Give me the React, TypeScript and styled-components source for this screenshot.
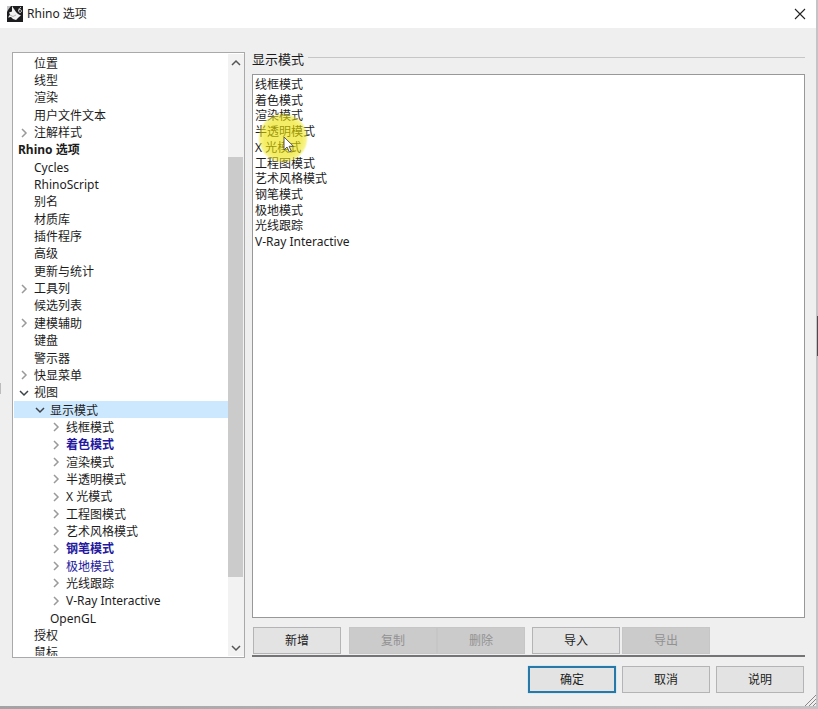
import React from "react";
import styled, { createGlobalStyle, css } from "styled-components";

const GlobalStyle = createGlobalStyle`
  * { box-sizing: border-box; }
  body {
    margin: 0;
    background: #a3a3a5;
    color: #1c1c1c;
    font-family: "Noto Sans", "Noto Sans CJK SC", sans-serif;
    font-size: 12px;
  }
  button { font: inherit; color: inherit; }
  ul { list-style: none; margin: 0; padding: 0; }
`;

const Desktop = styled.div`
  height: 100vh;
  min-height: 400px;
  display: flex;
  flex-direction: column;
  padding: 0 2px 3px 0;
  background: linear-gradient(#4c4c4e, #4c4c4e) right 316px / 1px 40px no-repeat,
    linear-gradient(90deg, #a3a3a5, #c4c4c6);
  background-size: 1px 40px, 100% 100%;
`;

const Dialog = styled.main`
  position: relative;
  flex: 1;
  min-height: 0;
  display: flex;
  flex-direction: column;
  background: #efeff0;
`;

const TitleBar = styled.header`
  height: 28px;
  flex: none;
  display: flex;
  align-items: center;
  gap: 4px;
  padding: 0 9px 1px 7px;
  background: #fff;
`;

const Title = styled.h1`
  flex: 1;
  margin: 0;
  font-size: 12px;
  font-weight: 400;
  line-height: 26px;
`;

const IconButton = styled.button`
  display: flex;
  align-items: center;
  justify-content: center;
  flex: none;
  padding: 0;
  border: 0;
  background: transparent;
`;

const Body = styled.div`
  flex: 1;
  min-height: 0;
  display: grid;
  grid-template-columns: 233px minmax(0, 1fr);
  gap: 7px;
  padding: 24px 11px 0 12px;
`;

const TreeFrame = styled.nav`
  display: flex;
  min-height: 0;
  border: 1px solid #a9a9ab;
  padding: 1px 0 1px 1px;
  background: #fff;
  overflow: hidden;
`;

const TreeView = styled.div`
  flex: 1;
  min-width: 0;
  overflow: hidden;
`;

const Tree = styled.ul`
  height: calc(100% + 5px);
  display: flex;
  flex-direction: column;
`;

const TreeRow = styled.li<{ $level: number; $selected?: boolean; $tone?: Tone }>`
  flex: 1 1 0;
  min-height: 0;
  display: flex;
  align-items: center;
  padding-top: 1px;
  padding-left: ${(p) => p.$level * 16 - 14}px;
  white-space: nowrap;
  line-height: 17px;
  ${(p) => p.$selected && css`background: #cce8ff;`}
  ${(p) => (p.$tone === "bold" || p.$tone === "boldBlue") && css`font-weight: 700;`}
  ${(p) => (p.$tone === "blue" || p.$tone === "boldBlue") && css`color: #2417a0;`}
`;

const Twisty = styled(IconButton)`
  width: 16px;
  height: 16px;
  margin-right: 2px;
`;

const TwistySpace = styled.span`
  width: 18px;
  flex: none;
`;

const ScrollBar = styled.div`
  width: 16px;
  flex: none;
  display: flex;
  flex-direction: column;
  padding-right: 1px;
  background: #f2f2f2;
`;

const ScrollArrow = styled(IconButton)`
  height: 17px;
`;

const ScrollGap = styled.div<{ $share: number }>`
  flex: ${(p) => p.$share} 1 0;
`;

const ScrollThumb = styled.div<{ $share: number }>`
  flex: ${(p) => p.$share} 1 0;
  background: #cbcbcb;
`;

const Panel = styled.section`
  display: flex;
  flex-direction: column;
  min-height: 0;
  margin-bottom: 1px;
  border-bottom: 2px solid #747476;
`;

const PanelHeading = styled.div`
  display: flex;
  gap: 4px;
  height: 22px;
  flex: none;
  &::after {
    content: "";
    flex: 1;
    height: 1px;
    margin-top: 5px;
    background: #c6c6c8;
  }
`;

const PanelTitle = styled.h2`
  margin: 0;
  font-size: 13px;
  font-weight: 400;
  line-height: 14px;
`;

const ListBox = styled.div`
  position: relative;
  flex: 1;
  min-height: 0;
  padding: 2px;
  border: 1px solid #98989a;
  background: #fff;
  overflow: hidden;
`;

const ModeList = styled.ul`
  height: 173px;
  display: grid;
  grid-template-rows: repeat(11, 1fr);
`;

const ModeItem = styled.li`
  display: flex;
  align-items: center;
  min-height: 0;
  line-height: 16px;
`;

const ClickHalo = styled.div`
  position: absolute;
  left: 5px;
  top: 38px;
  width: 50px;
  height: 50px;
  border-radius: 50%;
  background: radial-gradient(closest-side, rgba(236, 226, 0, 0.6) 75%, rgba(240, 232, 30, 0.5) 92%, rgba(250, 245, 120, 0.1));
  pointer-events: none;
`;

const Pointer = styled.svg`
  position: absolute;
  left: 30px;
  top: 61px;
  pointer-events: none;
`;

const Actions = styled.div`
  display: flex;
  padding: 9px 0 1px 1px;
  flex: none;
`;

const Button = styled.button<{ $primary?: boolean; $after?: number }>`
  width: 88px;
  height: 27px;
  flex: none;
  padding: 0;
  margin-right: ${(p) => p.$after ?? 0}px;
  border: ${(p) => (p.$primary ? "2px solid #2879a8" : "1px solid #b4b4b6")};
  background: #e3e3e3;
  line-height: 18px;
  ${(p) => p.$primary && css`box-shadow: 0 0 1px #68cdf0;`}
  &:disabled {
    border-color: #c6c6c6;
    background: #cbcbcb;
    color: #929292;
  }
  &:disabled + &:disabled {
    border-left-color: #e8e8e8;
  }
`;

const Footer = styled.footer`
  display: flex;
  justify-content: flex-end;
  gap: 6px;
  flex: none;
  padding: 8px 12px 13px;
`;

const ResizeGrip = styled.svg`
  position: absolute;
  right: 0;
  bottom: 0;
`;

const EdgeMark = styled.span`
  position: absolute;
  left: 0;
  top: 383px;
  width: 1px;
  height: 11px;
  background: #bcbcbe;
`;

type Tone = "bold" | "blue" | "boldBlue";
type Node = { label: string; level: number; state?: "open" | "closed"; tone?: Tone; selected?: boolean };

const nodes: Node[] = [
  { label: "位置", level: 1 },
  { label: "线型", level: 1 },
  { label: "渲染", level: 1 },
  { label: "用户文件文本", level: 1 },
  { label: "注解样式", level: 1, state: "closed" },
  { label: "Rhino 选项", level: 0, tone: "bold" },
  { label: "Cycles", level: 1 },
  { label: "RhinoScript", level: 1 },
  { label: "别名", level: 1 },
  { label: "材质库", level: 1 },
  { label: "插件程序", level: 1 },
  { label: "高级", level: 1 },
  { label: "更新与统计", level: 1 },
  { label: "工具列", level: 1, state: "closed" },
  { label: "候选列表", level: 1 },
  { label: "建模辅助", level: 1, state: "closed" },
  { label: "键盘", level: 1 },
  { label: "警示器", level: 1 },
  { label: "快显菜单", level: 1, state: "closed" },
  { label: "视图", level: 1, state: "open" },
  { label: "显示模式", level: 2, state: "open", selected: true },
  { label: "线框模式", level: 3, state: "closed" },
  { label: "着色模式", level: 3, state: "closed", tone: "boldBlue" },
  { label: "渲染模式", level: 3, state: "closed" },
  { label: "半透明模式", level: 3, state: "closed" },
  { label: "X 光模式", level: 3, state: "closed" },
  { label: "工程图模式", level: 3, state: "closed" },
  { label: "艺术风格模式", level: 3, state: "closed" },
  { label: "钢笔模式", level: 3, state: "closed", tone: "boldBlue" },
  { label: "极地模式", level: 3, state: "closed", tone: "blue" },
  { label: "光线跟踪", level: 3, state: "closed" },
  { label: "V-Ray Interactive", level: 3, state: "closed" },
  { label: "OpenGL", level: 2 },
  { label: "授权", level: 1 },
  { label: "鼠标", level: 1 },
];

const modes = nodes.filter((n) => n.level === 3).map((n) => n.label);

const RootRow = styled(TreeRow)`
  padding-left: 4px;
`;

const paths = {
  right: "M3 1l4 4-4 4",
  down: "M1 3l4 4 4-4",
  up: "M1 7l4-4 4 4",
};

function Chevron({ dir, color }: { dir: keyof typeof paths; color: string }) {
  return (
    <svg width="10" height="10" viewBox="0 0 10 10" fill="none" stroke={color} strokeWidth="1.5" aria-hidden="true">
      <path d={paths[dir]} />
    </svg>
  );
}

function RhinoIcon() {
  return (
    <svg width="16" height="16" viewBox="0 0 16 16" aria-hidden="true">
      <rect width="16" height="16" fill="#1d1d1f" />
      <path d="M5 0l2 3 2 3 2 2 3 1.500-2 1.500-3 3-3-1-2-2-3 .5 2-3-1-2 3-1z" fill="#f2f2f3" />
      <path d="M0 0h4L1 4 0 6z" fill="#c4c4c7" />
      <path d="M3 9l3 1.500L9 9" fill="none" stroke="#b4b4b8" />
      <path d="M14 1.500c-2.600 0-3 5-1 5s1.800-3 0-3-1.500 1.200-1.500 1.200" fill="none" stroke="#dcdcdc" />
    </svg>
  );
}

function TreeItem({ node }: { node: Node }) {
  const Row = node.level === 0 ? RootRow : TreeRow;
  return (
    <Row
      role="treeitem"
      aria-level={node.level + 1}
      aria-selected={!!node.selected}
      aria-expanded={node.state ? node.state === "open" : undefined}
      $level={node.level}
      $selected={node.selected}
      $tone={node.tone}
    >
      {node.state && (
        <Twisty aria-label={node.label}>
          <Chevron dir={node.state === "open" ? "down" : "right"} color={node.state === "open" ? "#3c4248" : "#9a9a9a"} />
        </Twisty>
      )}
      {!node.state && node.level > 0 && <TwistySpace />}
      {node.label}
    </Row>
  );
}

export default function App() {
  return (
    <>
      <GlobalStyle />
      <Desktop>
        <Dialog>
          <TitleBar>
            <RhinoIcon />
            <Title>Rhino 选项</Title>
            <IconButton aria-label="关闭">
              <svg width="14" height="14" viewBox="0 0 14 14" stroke="#222" strokeWidth="1.1" aria-hidden="true">
                <path d="M2 2l10 10M12 2L2 12" />
              </svg>
            </IconButton>
          </TitleBar>
          <Body>
            <TreeFrame aria-label="选项">
              <TreeView>
                <Tree role="tree">
                  {nodes.map((node, i) => (
                    <TreeItem key={i} node={node} />
                  ))}
                </Tree>
              </TreeView>
              <ScrollBar>
                <ScrollArrow aria-label="向上">
                  <Chevron dir="up" color="#555" />
                </ScrollArrow>
                <ScrollGap $share={86} />
                <ScrollThumb $share={420} />
                <ScrollGap $share={62} />
                <ScrollArrow aria-label="向下">
                  <Chevron dir="down" color="#555" />
                </ScrollArrow>
              </ScrollBar>
            </TreeFrame>
            <Panel>
              <PanelHeading>
                <PanelTitle>显示模式</PanelTitle>
              </PanelHeading>
              <ListBox>
                <ModeList role="listbox" aria-label="显示模式">
                  {modes.map((mode) => (
                    <ModeItem key={mode} role="option" aria-selected={false}>
                      {mode}
                    </ModeItem>
                  ))}
                </ModeList>
                <ClickHalo />
                <Pointer width="12" height="18" viewBox="0 0 12 18" aria-hidden="true">
                  <path d="M1 1v13l3-3 2.300 5 2-1-2.200-4.700H10.500z" fill="#fff" stroke="#555" />
                </Pointer>
              </ListBox>
              <Actions>
                <Button $after={8}>新增</Button>
                <Button disabled>复制</Button>
                <Button disabled $after={7}>删除</Button>
                <Button $after={2}>导入</Button>
                <Button disabled>导出</Button>
              </Actions>
            </Panel>
          </Body>
          <Footer>
            <Button $primary>确定</Button>
            <Button>取消</Button>
            <Button>说明</Button>
          </Footer>
          <EdgeMark />
          <ResizeGrip width="12" height="12" viewBox="0 0 12 12" stroke="#8c8486" aria-hidden="true">
            <path d="M1 12L12 1M5 12l7-7M9 12l3-3" />
          </ResizeGrip>
        </Dialog>
      </Desktop>
    </>
  );
}
